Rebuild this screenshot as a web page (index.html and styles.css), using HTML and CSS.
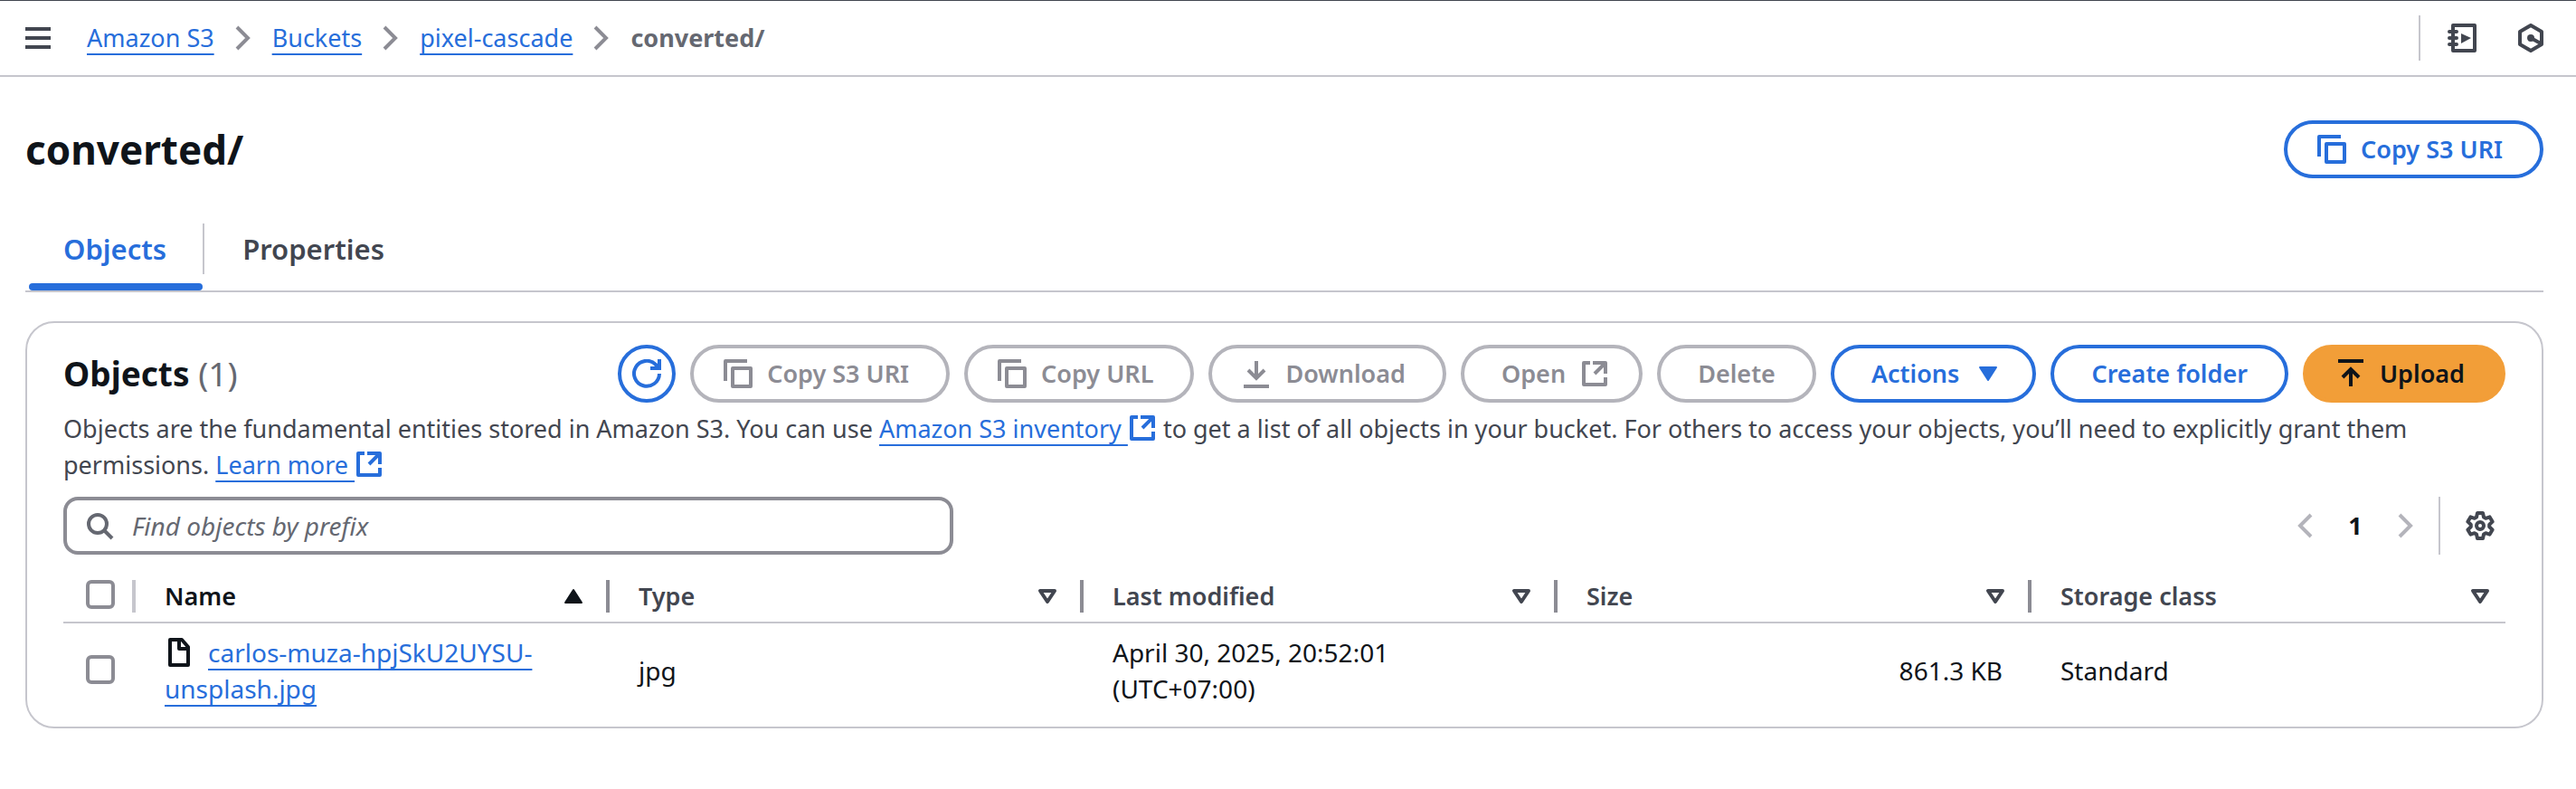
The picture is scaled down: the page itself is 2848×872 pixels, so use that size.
FILE: index.html
```html
<!DOCTYPE html>
<html lang="en">
<head>
<meta charset="utf-8">
<title>converted/ - S3 bucket</title>
<link rel="stylesheet" href="styles.css">
</head>
<body>
<svg class="sprite" aria-hidden="true">
  <symbol id="i-menu" viewBox="0 0 32 32"><path d="M2 6h28M2 16h28M2 26h28" stroke-width="4"/></symbol>
  <symbol id="i-chevron" viewBox="0 0 32 32"><path d="M9 4l12 12L9 28" stroke-width="4"/></symbol>
  <symbol id="i-back" viewBox="0 0 32 32"><path d="M23 4L11 16l12 12" stroke-width="4"/></symbol>
  <symbol id="i-copy" viewBox="0 0 32 32"><path d="M2 24V2h24" stroke-width="4" stroke-linejoin="round"/><path d="M10 10h20v20H10z" stroke-width="4" stroke-linejoin="round"/></symbol>
  <symbol id="i-external" viewBox="0 0 32 32"><path d="M11 4H4v24h24v-8M14 4h14v12M28 4L16 16" stroke-width="4" stroke-linejoin="round"/></symbol>
  <symbol id="i-refresh" viewBox="0 0 32 32"><path d="M30 16a14 14 0 1 1-4-10l4 4" stroke-width="4"/><path d="M30 0v10H20" stroke-width="4"/></symbol>
  <symbol id="i-download" viewBox="0 0 32 32"><path d="M16 2v20M7 12l9 9 9-9M2 30h28" stroke-width="4"/></symbol>
  <symbol id="i-upload" viewBox="0 0 32 32"><path d="M2 2h28M16 30V10M7 20l9-9 9 9" stroke-width="4"/></symbol>
  <symbol id="i-search" viewBox="0 0 32 32"><circle cx="14" cy="14" r="10" stroke-width="4"/><path d="M21 21l9 9" stroke-width="4"/></symbol>
  <symbol id="i-file" viewBox="0 0 32 32"><path d="M6 2h13l7 8v20H6zM16 2v10h10" stroke-width="4" stroke-linejoin="round"/></symbol>
  <symbol id="i-gear" viewBox="0 0 32 32"><path d="M12 6.500L13 2h6l1 4.500 2.200 1.300 4.400-1.400 3 5.200-3.400 3.100v2.600l3.400 3.100-3 5.200-4.400-1.400-2.200 1.300-1 4.500h-6l-1-4.500-2.200-1.300-4.400 1.400-3-5.200 3.400-3.100v-2.600l-3.400-3.100 3-5.200 4.400 1.400z" stroke-width="4" stroke-linejoin="round"/><circle cx="16" cy="16" r="4" stroke-width="4"/></symbol>
  <symbol id="i-guide" viewBox="0 0 36 32"><path d="M8 2h24v28H8z" stroke-width="4" stroke-linejoin="round"/><path d="M4 9h8M4 16h8M4 23h8" stroke-width="4" stroke-linecap="round"/><path d="M17 11l11 5-11 6z" fill="currentColor" stroke="none"/></symbol>
  <symbol id="i-hex" viewBox="0 0 32 32"><path d="M16 2l12 7v14l-12 7-12-7V9z" stroke-width="4" stroke-linejoin="round"/><circle cx="16" cy="16" r="4" fill="currentColor" stroke="none"/><path d="M16 16l11 6" stroke-width="4"/></symbol>
  <symbol id="i-down" viewBox="0 0 32 32"><path d="M7 9h18l-9 14z" fill="currentColor" stroke-width="2" stroke-linejoin="round"/></symbol>
  <symbol id="i-up" viewBox="0 0 32 32"><path d="M7 23h18l-9-14z" fill="currentColor" stroke-width="2" stroke-linejoin="round"/></symbol>
  <symbol id="i-sort" viewBox="0 0 32 32"><path d="M8 10h16l-8 12z" stroke-width="4" stroke-linejoin="round"/></symbol>
</svg>

<header class="topbar">
  <button class="icon-button" aria-label="Open navigation"><svg class="icon"><use href="#i-menu"/></svg></button>
  <nav class="crumbs" aria-label="Breadcrumbs">
    <a class="link" href="#s3">Amazon S3</a><svg class="icon crumb-sep"><use href="#i-chevron"/></svg>
    <a class="link" href="#buckets">Buckets</a><svg class="icon crumb-sep"><use href="#i-chevron"/></svg>
    <a class="link" href="#bucket">pixel-cascade</a><svg class="icon crumb-sep"><use href="#i-chevron"/></svg>
    <span class="crumb-current">converted/</span>
  </nav>
  <div class="tools">
    <button class="icon-button" aria-label="Tutorials"><svg class="icon icon-wide"><use href="#i-guide"/></svg></button>
    <button class="icon-button" aria-label="Diagnostics"><svg class="icon"><use href="#i-hex"/></svg></button>
  </div>
</header>

<main class="page">
  <div class="title-row">
    <h1 class="title">converted/</h1>
    <button class="button"><svg class="icon"><use href="#i-copy"/></svg>Copy S3 URI</button>
  </div>

  <div class="tabs" role="tablist">
    <button class="tab tab-active" role="tab" aria-selected="true">Objects</button>
    <button class="tab" role="tab" aria-selected="false">Properties</button>
  </div>

  <section class="card">
    <div class="card-head">
      <h2 class="card-title">Objects <span class="count">(1)</span></h2>
      <div class="actions">
        <button class="button button-round" aria-label="Refresh"><svg class="icon"><use href="#i-refresh"/></svg></button>
        <button class="button" disabled><svg class="icon"><use href="#i-copy"/></svg>Copy S3 URI</button>
        <button class="button" disabled><svg class="icon"><use href="#i-copy"/></svg>Copy URL</button>
        <button class="button" disabled><svg class="icon"><use href="#i-download"/></svg>Download</button>
        <button class="button" disabled>Open<svg class="icon icon-end"><use href="#i-external"/></svg></button>
        <button class="button" disabled>Delete</button>
        <button class="button">Actions<svg class="icon icon-end"><use href="#i-down"/></svg></button>
        <button class="button">Create folder</button>
        <button class="button button-primary"><svg class="icon"><use href="#i-upload"/></svg>Upload</button>
      </div>
    </div>
    <p class="description">Objects are the fundamental entities stored in Amazon S3. You can use <a class="link" href="#inventory">Amazon S3 inventory&nbsp;<svg class="icon"><use href="#i-external"/></svg></a> to get a list of all objects in your bucket. For others to access your objects, you’ll need to explicitly grant them permissions. <a class="link" href="#learn">Learn more&nbsp;<svg class="icon"><use href="#i-external"/></svg></a></p>

    <div class="filter-row">
      <label class="search"><svg class="icon"><use href="#i-search"/></svg><input class="search-input" type="search" placeholder="Find objects by prefix" aria-label="Find objects by prefix"></label>
      <div class="pager">
        <button class="icon-button pager-arrow" aria-label="Previous page" disabled><svg class="icon"><use href="#i-back"/></svg></button>
        <button class="page-number">1</button>
        <button class="icon-button pager-arrow" aria-label="Next page" disabled><svg class="icon"><use href="#i-chevron"/></svg></button>
        <div class="settings"><button class="icon-button" aria-label="Preferences"><svg class="icon"><use href="#i-gear"/></svg></button></div>
      </div>
    </div>

    <table class="table">
      <colgroup><col class="col-check"><col><col><col><col><col></colgroup>
      <thead>
        <tr>
          <th><div class="head head-check"><input class="check" type="checkbox" aria-label="Select all objects"></div></th>
          <th><div class="head head-sorted">Name<svg class="icon"><use href="#i-up"/></svg></div></th>
          <th><div class="head">Type<svg class="icon"><use href="#i-sort"/></svg></div></th>
          <th><div class="head">Last modified<svg class="icon"><use href="#i-sort"/></svg></div></th>
          <th><div class="head">Size<svg class="icon"><use href="#i-sort"/></svg></div></th>
          <th><div class="head head-last">Storage class<svg class="icon"><use href="#i-sort"/></svg></div></th>
        </tr>
      </thead>
      <tbody>
        <tr>
          <td class="cell-check"><input class="check" type="checkbox" aria-label="Select carlos-muza-hpjSkU2UYSU-unsplash.jpg"></td>
          <td><svg class="icon file-icon"><use href="#i-file"/></svg><a class="link" href="#file">carlos-muza-hpjSkU2UYSU-unsplash.jpg</a></td>
          <td>jpg</td>
          <td>April 30, 2025, 20:52:01 (UTC+07:00)</td>
          <td class="cell-number">861.3 KB</td>
          <td>Standard</td>
        </tr>
      </tbody>
    </table>
  </section>
</main>
</body>
</html>
```

FILE: styles.css
```css
:root {
  --blue: #276edb;
  --ink: #0f141a;
  --text: #424650;
  --muted: #656871;
  --line: #c6c6cd;
  --field: #8c8c94;
  --disabled-line: #b4b4bb;
}

* { box-sizing: border-box; }

body {
  margin: 0;
  background: #fff;
  color: var(--ink);
  font: 27px/40px "Noto Sans", "Open Sans", sans-serif;
}

button, input { font: inherit; color: inherit; }
button { padding: 0; border: 0; background: none; }
h1, h2, p { margin: 0; }

.sprite { position: absolute; width: 0; height: 0; }
.icon { width: 32px; height: 32px; flex: none; fill: none; stroke: currentColor; }
.icon-wide { width: 36px; }
.icon-button { display: flex; color: var(--text); }

.link {
  color: var(--blue);
  text-decoration: underline 2px;
  text-underline-offset: 7px;
  text-decoration-skip-ink: none;
}

.topbar {
  display: flex;
  align-items: center;
  height: 85px;
  padding: 0 34px 0 26px;
  border-top: 1px solid var(--text);
  border-bottom: 2px solid var(--line);
}
.crumbs { display: flex; align-items: center; gap: 16px; margin-left: 38px; }
.crumb-sep { color: var(--field); }
.crumb-current { color: var(--muted); font-weight: 700; }
.tools {
  display: flex;
  align-items: center;
  gap: 42px;
  height: 50px;
  margin-left: auto;
  padding-left: 28px;
  border-left: 2px solid var(--line);
}

.page { padding: 48px 36px 0 28px; }
.title-row { display: flex; align-items: center; justify-content: space-between; }
.title { font-size: 44px; line-height: 60px; }

.button {
  display: flex;
  align-items: center;
  justify-content: center;
  gap: 16px;
  height: 64px;
  padding: 0 41px;
  border: 4px solid var(--blue);
  border-radius: 32px;
  color: var(--blue);
  font-weight: 600;
  white-space: nowrap;
}
.button .icon { margin-left: -8px; }
.button .icon-end { margin: 0 -8px 0 0; }
.button:disabled { border-color: var(--disabled-line); color: var(--field); }
.button-round { width: 64px; padding: 0; }
.button-round .icon { margin: 0; }
.button-primary { border-color: #f29e38; background: #f29e38; color: var(--ink); }

.tabs { display: flex; height: 90px; margin-top: 36px; border-bottom: 2px solid var(--line); }
.tab {
  position: relative;
  height: 56px;
  margin-top: 14px;
  padding: 0 42px;
  color: var(--text);
  font-size: 31px;
  font-weight: 600;
}
.tab-active { padding-right: 40px; border-right: 2px solid var(--line); color: var(--blue); }
.tab-active::after {
  content: "";
  position: absolute;
  right: 0;
  bottom: -18px;
  left: 4px;
  height: 8px;
  border-radius: 4px;
  background: var(--blue);
}

.card {
  margin-top: 32px;
  padding: 24px 40px 0;
  border: 2px solid var(--line);
  border-radius: 32px;
}
.card-head { display: flex; align-items: center; justify-content: space-between; }
.card-title { font-size: 37px; line-height: 48px; }
.count { color: var(--muted); font-weight: 400; }
.actions { display: flex; gap: 16px; }
.description { margin-top: 9px; color: var(--text); }
.description .icon { vertical-align: -5px; }

.filter-row { display: flex; align-items: center; justify-content: space-between; margin-top: 15px; }
.search {
  display: flex;
  align-items: center;
  gap: 20px;
  width: 100%;
  max-width: 984px;
  height: 64px;
  padding: 0 20px;
  border: 4px solid var(--field);
  border-radius: 16px;
  color: var(--muted);
}
.search-input { flex: 1; padding: 0; border: 0; outline: 0; background: none; font-size: 28px; }
.search-input::placeholder { color: var(--muted); font-style: italic; opacity: 1; }

.pager { display: flex; align-items: center; }
.pager-arrow { color: var(--disabled-line); }
.page-number { width: 80px; font-weight: 700; }
.settings {
  display: flex;
  align-items: center;
  height: 64px;
  margin-left: 20px;
  padding: 0 12px 0 28px;
  border-left: 2px solid var(--line);
}

.table { width: 100%; margin-top: 16px; border-spacing: 0; table-layout: fixed; }
.col-check { width: 80px; }
th { padding: 12px 0 10px; border-bottom: 2px solid var(--line); text-align: left; font-weight: 600; }
td { padding: 12px 32px 22px; font-size: 28px; }
.head {
  display: flex;
  align-items: center;
  justify-content: space-between;
  height: 36px;
  padding: 0 20px 0 32px;
  border-right: 4px solid var(--field);
  color: var(--text);
}
.head-sorted { color: var(--ink); }
.head-last { padding-right: 12px; border-right: 0; }
.head-check { align-items: flex-start; padding: 0 0 0 25px; border-color: var(--line); }
.cell-check { padding: 14px 0 26px 25px; }
.cell-number { text-align: right; }
.check {
  display: block;
  appearance: none;
  width: 32px;
  height: 32px;
  margin: 0;
  border: 4px solid var(--field);
  border-radius: 6px;
}
.file-icon { margin-right: 16px; vertical-align: -5px; }
```
